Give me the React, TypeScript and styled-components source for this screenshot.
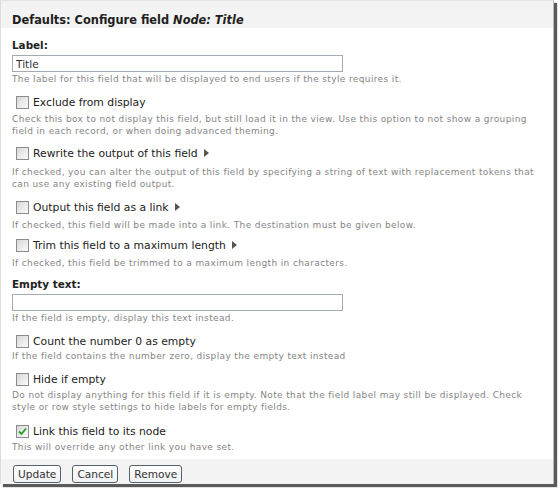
import React from 'react';
import styled, { createGlobalStyle } from 'styled-components';

const Global = createGlobalStyle`
  html, body { margin: 0; padding: 0; background: #fff; }
  body { font-family: "DejaVu Sans", Verdana, sans-serif; }
`;

const Page = styled.div`
  width: 560px;
  height: 488px;
  background: #fff;
`;

const Panel = styled.div`
  box-sizing: border-box;
  width: 554px;
  height: 484px;
  border-left: 1px solid #dcdcdc;
  border-top: 1px solid #e4e4e4;
  border-right: 1px solid #bbb;
  box-shadow: 3px 3px 1px #5a5a5a;
  display: flex;
  flex-direction: column;
  background: #fff;
`;

const Header = styled.div`
  height: 27px;
  background: #f3f3f3;
  padding: 13px 0 0 11px;
  box-sizing: border-box;
  font-size: 11.4px;
  line-height: 13px;
  font-weight: bold;
  color: #1e1e1e;
  em { font-style: italic; }
`;

const Body = styled.div`
  flex: 1;
  padding: 0 11px;
  display: flex;
  flex-direction: column;
`;

const FieldLabel = styled.div<{ $mt: number }>`
  margin-top: ${(p) => p.$mt}px;
  font-size: 10.4px;
  line-height: 14px;
  font-weight: bold;
  color: #222;
`;

const TextInput = styled.input<{ $mt: number }>`
  box-sizing: border-box;
  margin: ${(p) => p.$mt}px 0 0 0;
  width: 331px;
  height: 17px;
  border: 1px solid #a4abb2;
  padding: 0 3px;
  font-family: "DejaVu Sans", Verdana, sans-serif;
  font-size: 10.6px;
  color: #333;
  outline: none;
`;

const Desc = styled.div<{ $mt: number }>`
  margin-top: ${(p) => p.$mt}px;
  font-size: 9px;
  line-height: 12px;
  color: #858585;
  letter-spacing: 0.37px;
  white-space: nowrap;
`;

const CheckRow = styled.label<{ $mt: number }>`
  margin-top: ${(p) => p.$mt}px;
  display: flex;
  align-items: center;
  height: 14px;
  padding-left: 4px;
  font-size: 10.8px;
  color: #222;
`;

const Box = styled.span`
  box-sizing: border-box;
  width: 13px;
  height: 13px;
  border: 1px solid #8c8c8c;
  background: linear-gradient(135deg, #d8d8d8, #fafafa);
  margin-right: 4px;
  display: flex;
  align-items: center;
  justify-content: center;
  flex-shrink: 0;
`;

const Arrow = styled.svg`
  margin-left: 6px;
`;

const Footer = styled.div`
  height: 25px;
  box-sizing: border-box;
  background: #f3f3f3;
  display: flex;
  align-items: flex-end;
  padding: 0 0 1px 12px;
  gap: 11px;
`;

const Button = styled.button`
  box-sizing: border-box;
  height: 18px;
  padding: 0 4px;
  border: 1px solid #56606a;
  border-radius: 3px;
  background: linear-gradient(#fff, #eef0f2);
  font-family: "DejaVu Sans", Verdana, sans-serif;
  font-size: 10.6px;
  color: #333;
`;

const Tri = () => (
  <Arrow width="5" height="8" viewBox="0 0 5 8">
    <polygon points="0,0 5,4 0,8" fill="#555" />
  </Arrow>
);

const Check: React.FC<{ checked?: boolean }> = ({ checked }) => (
  <Box>
    {checked && (
      <svg width="9" height="9" viewBox="0 0 9 9">
        <polyline points="1,4.5 3.5,7 8,1.5" fill="none" stroke="#21a121" strokeWidth="1.8" />
      </svg>
    )}
  </Box>
);

export default function App() {
  return (
    <Page>
      <Global />
      <Panel>
        <Header>
          Defaults: Configure field <em>Node: Title</em>
        </Header>
        <Body>
          <FieldLabel $mt={10}>Label:</FieldLabel>
          <TextInput $mt={3} defaultValue="Title" />
          <Desc $mt={1}>The label for this field that will be displayed to end users if the style requires it.</Desc>

          <CheckRow $mt={10}><Check />Exclude from display</CheckRow>
          <Desc $mt={4}>
            Check this box to not display this field, but still load it in the view. Use this option to not show a grouping<br />
            field in each record, or when doing advanced theming.
          </Desc>

          <CheckRow $mt={9}><Check />Rewrite the output of this field<Tri /></CheckRow>
          <Desc $mt={6}>
            If checked, you can alter the output of this field by specifying a string of text with replacement tokens that<br />
            can use any existing field output.
          </Desc>

          <CheckRow $mt={10}><Check />Output this field as a link<Tri /></CheckRow>
          <Desc $mt={5}>If checked, this field will be made into a link. The destination must be given below.</Desc>

          <CheckRow $mt={7}><Check />Trim this field to a maximum length<Tri /></CheckRow>
          <Desc $mt={5}>If checked, this field be trimmed to a maximum length in characters.</Desc>

          <FieldLabel $mt={8}>Empty text:</FieldLabel>
          <TextInput $mt={3} />
          <Desc $mt={1}>If the field is empty, display this text instead.</Desc>

          <CheckRow $mt={10}><Check />Count the number 0 as empty</CheckRow>
          <Desc $mt={2}>If the field contains the number zero, display the empty text instead</Desc>

          <CheckRow $mt={10}><Check />Hide if empty</CheckRow>
          <Desc $mt={3}>
            Do not display anything for this field if it is empty. Note that the field label may still be displayed. Check<br />
            style or row style settings to hide labels for empty fields.
          </Desc>

          <CheckRow $mt={11}><Check checked />Link this field to its node</CheckRow>
          <Desc $mt={3}>This will override any other link you have set.</Desc>
        </Body>
        <Footer>
          <Button>Update</Button>
          <Button>Cancel</Button>
          <Button>Remove</Button>
        </Footer>
      </Panel>
    </Page>
  );
}
